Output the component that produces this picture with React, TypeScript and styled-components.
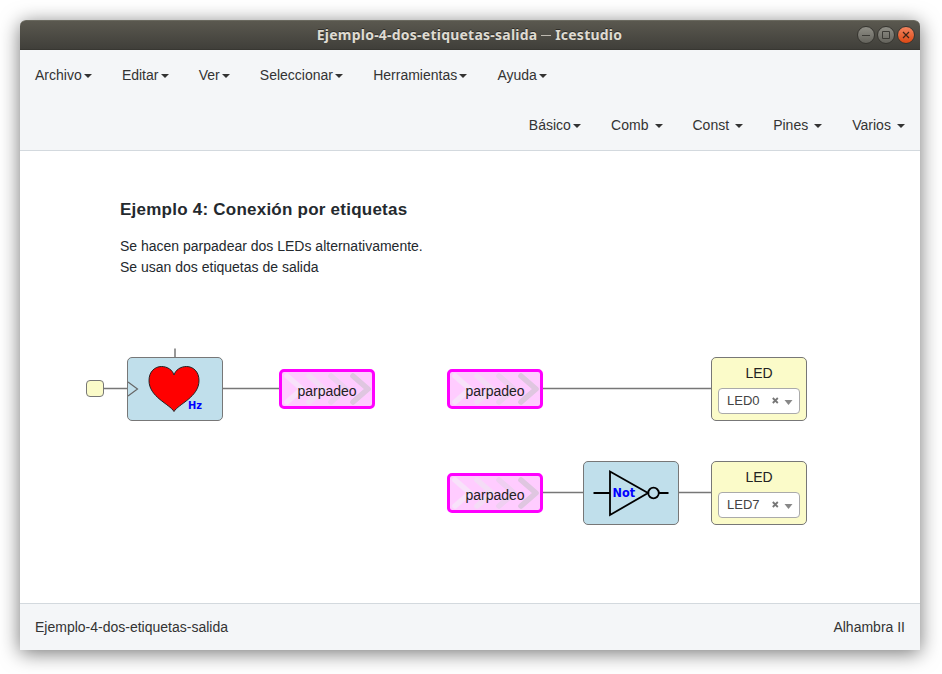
import React from "react";
import styled, { createGlobalStyle } from "styled-components";

const GlobalStyle = createGlobalStyle`
  * { box-sizing: border-box; }
  body {
    margin: 0;
    background: #fff;
    font-family: "Liberation Sans", Arial, sans-serif;
    font-size: 14px;
    color: #333;
  }
`;

const Desktop = styled.div`
  width: 942px;
  height: 674px;
  padding: 20px 22px 24px 20px;
  overflow: hidden;
`;

const Window = styled.div`
  display: flex;
  flex-direction: column;
  height: 630px;
  border-radius: 6px 6px 0 0;
  background: #fff;
  box-shadow: 0 3px 20px rgba(0, 0, 0, 0.55);
`;

const TitleBar = styled.header`
  display: grid;
  grid-template-columns: 62px 1fr 60px;
  align-items: center;
  height: 30px;
  flex: none;
  padding-right: 3px;
  border-radius: 6px 6px 0 0;
  border-top: 1px solid #6a695f;
  border-bottom: 1px solid #383732;
  background: linear-gradient(#5a584f, #403f3a);
`;

const Title = styled.h1`
  grid-column: 2;
  margin: 0;
  text-align: center;
  font: bold 14px/28px "Noto Sans", sans-serif;
  letter-spacing: 0.23px;
  color: #dfdbd2;
  text-shadow: 0 -1px 0 #2c2b27;
  white-space: nowrap;
`;

const TitleDash = styled.span`
  display: inline-block;
  width: 10px;
  height: 1px;
  margin: 0 0 4px;
  vertical-align: baseline;
  background: #bdb9b0;
`;

const WindowButtons = styled.div`
  display: flex;
  gap: 2px;
`;

const WindowButton = styled.span<{ $close?: boolean }>`
  display: grid;
  place-items: center;
  width: 18px;
  height: 18px;
  border: 1px solid #363530;
  border-radius: 50%;
  background: ${(p) =>
    p.$close ? "linear-gradient(#f3845f, #dd4814)" : "linear-gradient(#8f8e86, #64635c)"};
`;

const NavBar = styled.nav`
  flex: none;
  height: 101px;
  background: #f4f6f8;
  border-bottom: 1px solid #d3d9de;
`;

const MenuRow = styled.div<{ $right?: boolean }>`
  display: flex;
  height: 50px;
  justify-content: ${(p) => (p.$right ? "flex-end" : "flex-start")};
`;

const MenuItem = styled.a`
  padding: 15px;
  line-height: 20px;
  white-space: pre;
`;

const Caret = styled.span`
  display: inline-block;
  margin-left: 2.2px;
  vertical-align: middle;
  border-top: 4px solid #333;
  border-left: 4px solid transparent;
  border-right: 4px solid transparent;
`;

const Canvas = styled.main`
  position: relative;
  flex: 1;
  background: #fff;
`;

const Note = styled.section`
  padding: 48px 0 0 100px;
  line-height: 21px;
  color: #24292e;
`;

const NoteTitle = styled.h2`
  margin: 0 0 16px;
  font-size: 17px;
  line-height: 21px;
  letter-spacing: 0.235px;
`;

const NoteText = styled.p`
  margin: 0;
`;

const Wires = styled.svg`
  position: absolute;
  left: 0;
  top: 0;
`;

const Node = styled.div<{ $x: number; $y: number }>`
  position: absolute;
  left: ${(p) => p.$x}px;
  top: ${(p) => p.$y}px;
`;

const Block = styled(Node)`
  width: 96px;
  height: 64px;
  border: 1px solid #777;
  border-radius: 5px;
  background: #c0dfeb;

  svg {
    display: block;
  }
`;

const ClockPort = styled(Node)`
  width: 18px;
  height: 17px;
  border: 1px solid #777;
  border-radius: 4px;
  background: #fbfbc9;
`;

const TagBlock = styled(Node)`
  display: grid;
  width: 96px;
  height: 40px;
  border: 3px solid #f0f;
  border-radius: 5px;
  background: #fcf;

  > * {
    grid-area: 1 / 1;
  }
`;

const TagName = styled.span`
  text-align: center;
  line-height: 38px;
  color: #222;
`;

const PinBlock = styled(Block)`
  padding: 5px 6px;
  background: #fbfbc9;
`;

const PinName = styled.div`
  height: 25px;
  line-height: 20px;
  text-align: center;
  color: #222;
`;

const PinSelect = styled.div`
  display: flex;
  align-items: center;
  width: 82px;
  height: 26px;
  padding: 0 6px 0 8px;
  border: 1px solid #aaa;
  border-radius: 4px;
  background: #fff;
  font-size: 13px;
  line-height: 22px;
  color: #444;
`;

const PinValue = styled.span`
  flex: 1;
`;

const StatusBar = styled.footer`
  display: flex;
  flex: none;
  justify-content: space-between;
  height: 47px;
  padding: 0 15px;
  line-height: 46px;
  background: #f4f6f8;
  border-top: 1px solid #d3d9de;
`;

const BlockLabel = styled.text`
  font-family: "DejaVu Sans Condensed", "DejaVu Sans", sans-serif;
  font-stretch: condensed;
  font-weight: bold;
  fill: #00f;
`;

const Menu = ({ label }: { label: string }) => (
  <MenuItem>
    {label}
    <Caret />
  </MenuItem>
);

const chevrons = [
  { x: 5, color: "#f8e2fa" },
  { x: 27, color: "#f4dcf6" },
  { x: 49, color: "#efcff1" },
  { x: 71, color: "#dfc6e0" },
];

const Tag = ({ x, y }: { x: number; y: number }) => (
  <TagBlock $x={x} $y={y}>
    <svg width="90" height="34" fill="none" strokeWidth="5.6" strokeLinecap="round" strokeLinejoin="round">
      {chevrons.map((c) => (
        <path key={c.x} d={`M${c.x} 4 L${c.x + 15} 17 L${c.x} 30`} stroke={c.color} />
      ))}
    </svg>
    <TagName>parpadeo</TagName>
  </TagBlock>
);

const Pin = ({ x, y, value }: { x: number; y: number; value: string }) => (
  <PinBlock $x={x} $y={y}>
    <PinName>LED</PinName>
    <PinSelect>
      <PinValue>{value}</PinValue>
      <svg width="22" height="12">
        <path d="M1.800 3 L6.800 8 M6.800 3 L1.800 8" stroke="#777" strokeWidth="1.8" />
        <path d="M13.500 5 h8 l-4 5 z" fill="#888" />
      </svg>
    </PinSelect>
  </PinBlock>
);

export default function App() {
  return (
    <Desktop>
      <GlobalStyle />
      <Window>
        <TitleBar>
          <Title>
            Ejemplo-4-dos-etiquetas-salida <TitleDash /> Icestudio
          </Title>
          <WindowButtons>
            <WindowButton>
              <svg width="10" height="10"><path d="M1 5.5h8" stroke="#3c3b36" /></svg>
            </WindowButton>
            <WindowButton>
              <svg width="10" height="10"><path d="M1.5 1.5h7v7h-7z" fill="none" stroke="#3c3b36" /></svg>
            </WindowButton>
            <WindowButton $close>
              <svg width="10" height="10"><path d="M2 2l6 6M8 2l-6 6" stroke="#3c2418" strokeWidth="1.2" /></svg>
            </WindowButton>
          </WindowButtons>
        </TitleBar>
        <NavBar>
          <MenuRow>
            {["Archivo", "Editar", "Ver", "Seleccionar", "Herramientas", "Ayuda"].map((m) => (
              <Menu key={m} label={m} />
            ))}
          </MenuRow>
          <MenuRow $right>
            {["Básico", "Comb ", "Const ", "Pines ", "Varios "].map((m) => (
              <Menu key={m} label={m} />
            ))}
          </MenuRow>
        </NavBar>
        <Canvas>
          <Note>
            <NoteTitle>Ejemplo 4: Conexión por etiquetas</NoteTitle>
            <NoteText>Se hacen parpadear dos LEDs alternativamente.</NoteText>
            <NoteText>Se usan dos etiquetas de salida</NoteText>
          </Note>
          <Wires width="900" height="452" stroke="#777" strokeWidth="1.5">
            <path d="M84 237.5H107M203 237.5H259M523 237.5H691M523 341.5H563M659 341.5H691M155 197.500V206" />
          </Wires>
          <ClockPort $x={66} $y={229} />
          <Block $x={107} $y={206}>
            <svg width="94" height="62">
              <path d="M0 24 L9.500 31 L0 38" fill="none" stroke="#666" strokeWidth="1.2" />
              <path
                d="M46 53.500 C41.500 46 21 39 21 22.500 C21 13.500 27 8.500 33.500 8.500 C39.500 8.500 44.500 12 46 17 C47.500 12 52.500 8.500 58.500 8.500 C65 8.500 71 13.500 71 22.500 C71 39 50.500 46 46 53.500 Z"
                fill="#f00"
                stroke="#222"
              />
              <BlockLabel x="60" y="51" fontSize="11">Hz</BlockLabel>
            </svg>
          </Block>
          <Tag x={259} y={218} />
          <Tag x={427} y={218} />
          <Tag x={427} y={322} />
          <Pin x={691} y={206} value="LED0" />
          <Block $x={563} $y={310}>
            <svg width="94" height="62">
              <g fill="none" stroke="#000" strokeWidth="1.8">
                <path d="M9.500 31H26M26 9.500V53L64 31ZM75 31H84.500" />
                <circle cx="69.500" cy="31" r="5.300" />
              </g>
              <BlockLabel x="28.500" y="35" fontSize="12.500">Not</BlockLabel>
            </svg>
          </Block>
          <Pin x={691} y={310} value="LED7" />
        </Canvas>
        <StatusBar>
          <span>Ejemplo-4-dos-etiquetas-salida</span>
          <span>Alhambra II</span>
        </StatusBar>
      </Window>
    </Desktop>
  );
}
